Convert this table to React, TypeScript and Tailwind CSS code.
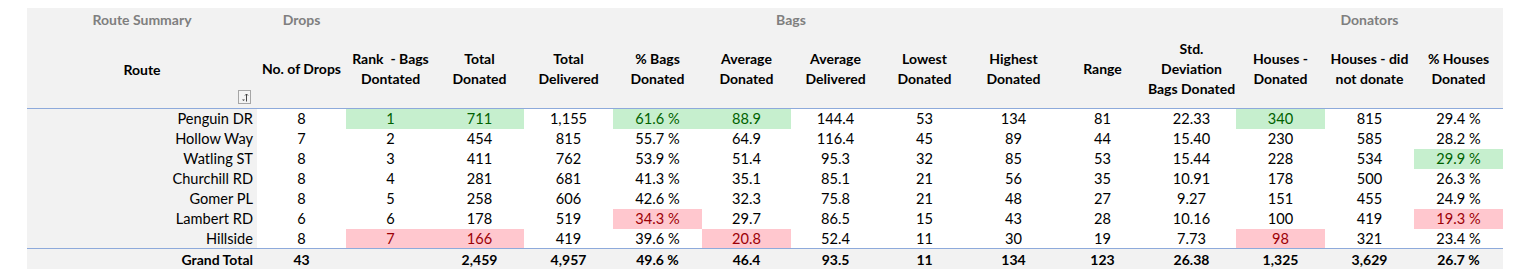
const groups = [
  { label: "Route Summary", span: "col-span-1" },
  { label: "Drops", span: "col-span-1" },
  { label: "Bags", span: "col-span-10" },
  { label: "Donators", span: "col-span-3" },
];

const headers: string[][] = [
  ["No. of Drops"],
  ["Rank\u00a0 - Bags", "Dontated"],
  ["Total", "Donated"],
  ["Total", "Delivered"],
  ["% Bags", "Donated"],
  ["Average", "Donated"],
  ["Average", "Delivered"],
  ["Lowest", "Donated"],
  ["Highest", "Donated"],
  ["Range"],
  ["Std.", "Deviation", "Bags Donated"],
  ["Houses -", "Donated"],
  ["Houses - did", "not donate"],
  ["% Houses", "Donated"],
];

type Row = { route: string; values: (string | number)[]; good?: number[]; bad?: number[] };

const rows: Row[] = [
  { route: "Penguin DR", values: [8, 1, "711", "1,155", "61.6 %", "88.9", "144.4", 53, 134, 81, "22.33", "340", "815", "29.4 %"], good: [1, 2, 4, 5, 11] },
  { route: "Hollow Way", values: [7, 2, "454", "815", "55.7 %", "64.9", "116.4", 45, 89, 44, "15.40", "230", "585", "28.2 %"] },
  { route: "Watling ST", values: [8, 3, "411", "762", "53.9 %", "51.4", "95.3", 32, 85, 53, "15.44", "228", "534", "29.9 %"], good: [13] },
  { route: "Churchill RD", values: [8, 4, "281", "681", "41.3 %", "35.1", "85.1", 21, 56, 35, "10.91", "178", "500", "26.3 %"] },
  { route: "Gomer PL", values: [8, 5, "258", "606", "42.6 %", "32.3", "75.8", 21, 48, 27, "9.27", "151", "455", "24.9 %"] },
  { route: "Lambert RD", values: [6, 6, "178", "519", "34.3 %", "29.7", "86.5", 15, 43, 28, "10.16", "100", "419", "19.3 %"], bad: [4, 13] },
  { route: "Hillside", values: [8, 7, "166", "419", "39.6 %", "20.8", "52.4", 11, 30, 19, "7.73", "98", "321", "23.4 %"], bad: [1, 2, 5, 11] },
];

const totals = ["43", "", "2,459", "4,957", "49.6 %", "46.4", "93.5", "11", "134", "123", "26.38", "1,325", "3,629", "26.7 %"];

function SortButton() {
  return (
    <div className="absolute right-[6px] bottom-[4px] w-[13px] h-[14px] border border-[#a6a6a6] bg-[#f4f4f4]">
      <svg width="11" height="12" viewBox="0 0 11 12" className="block">
        <path d="M3 8.5h3l-1.5 1.5z" fill="#444" />
        <path d="M7.5 10.5V3" stroke="#444" strokeWidth="1" />
        <path d="M6 4.5l1.5-1.5 1.5 1.5" stroke="#444" strokeWidth="1" fill="none" />
      </svg>
    </div>
  );
}

export default function App() {
  return (
    <div className="min-h-[278px] bg-white pt-[8px] pl-[27px] font-[Lato,sans-serif] text-[14.6px] text-black">
      <div className="grid w-[1476px] grid-cols-[230px_repeat(14,89px)]">
        {/* group row */}
        {groups.map((g) => (
          <div
            key={g.label}
            className={`${g.span} h-[22px] bg-[#f2f2f2] flex items-center justify-center font-bold text-[14px] text-[#7f7f7f]`}
          >
            {g.label}
          </div>
        ))}

        {/* header row */}
        <div className="relative h-[79px] bg-[#f2f2f2] flex items-center justify-center font-bold text-[14px] border-b border-[#8eaadb]">
          Route
          <SortButton />
        </div>
        {headers.map((h, i) => (
          <div
            key={i}
            className="h-[79px] bg-[#f2f2f2] flex flex-col items-center justify-center font-bold text-[14px] leading-[20px] text-center border-b border-[#8eaadb] whitespace-nowrap"
          >
            {h.map((line, j) => (
              <span key={j}>{line}</span>
            ))}
          </div>
        ))}

        {/* body */}
        {rows.map((r, ri) => (
          <div key={r.route} className="contents">
            <div
              className={`h-[20px] bg-[#f2f2f2] flex items-center justify-end pr-[4px] ${
                ri === rows.length - 1 ? "border-b border-[#8eaadb]" : ""
              }`}
            >
              {r.route}
            </div>
            {r.values.map((v, ci) => {
              const good = r.good?.includes(ci);
              const bad = r.bad?.includes(ci);
              return (
                <div
                  key={ci}
                  className={`h-[20px] flex items-center justify-center ${
                    good ? "bg-[#c6efce] text-[#006100]" : bad ? "bg-[#ffc7ce] text-[#9c0006]" : "bg-white"
                  } ${ri === rows.length - 1 ? "border-b border-[#8eaadb]" : ""}`}
                >
                  {v}
                </div>
              );
            })}
          </div>
        ))}

        {/* grand total */}
        <div className="h-[20px] bg-[#f2f2f2] flex items-center justify-end pr-[4px] font-bold text-[14px]">Grand Total</div>
        {totals.map((t, i) => (
          <div key={i} className="h-[20px] bg-[#f2f2f2] flex items-center justify-center font-bold text-[14px]">
            {t}
          </div>
        ))}
      </div>
    </div>
  );
}
